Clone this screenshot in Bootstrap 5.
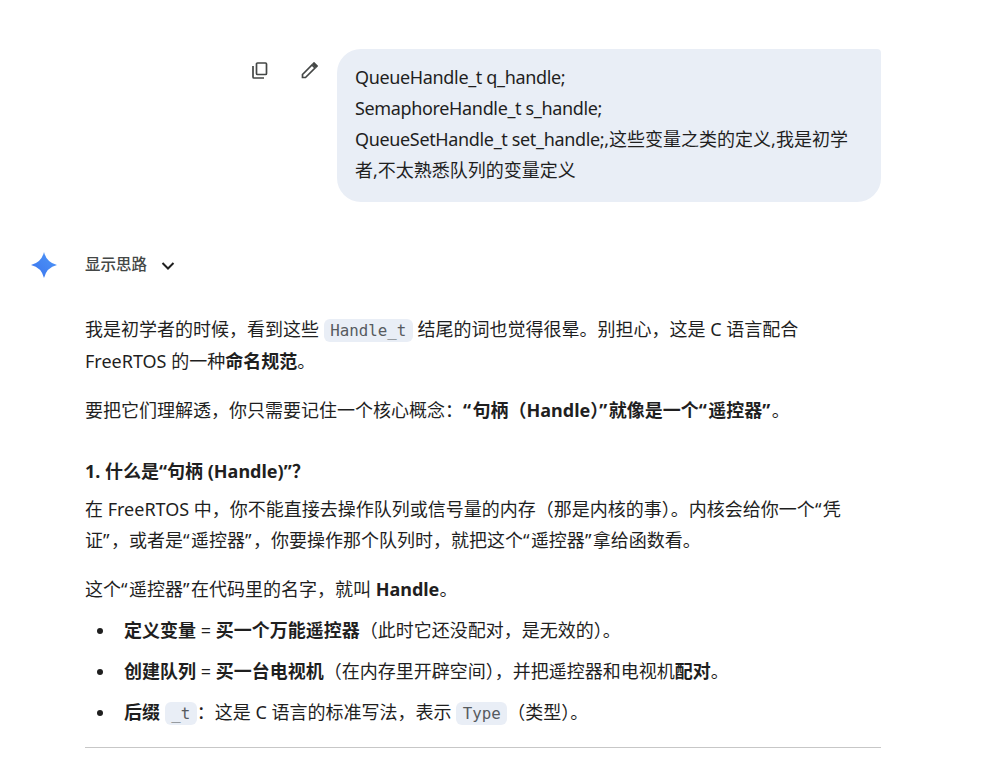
<!DOCTYPE html>
<html lang="zh-CN">
<head>
  <meta charset="UTF-8">
  <meta name="viewport" content="width=device-width, initial-scale=1.0">
  <title>显示思路</title>
  <link rel="stylesheet" href="https://cdn.jsdelivr.net/npm/bootstrap@5.3.0/dist/css/bootstrap.min.css">
  <style>
    body {
      background: #fff;
      color: #1f1f1f;
      font-family: "Noto Sans", "Noto Sans CJK SC", sans-serif;
      font-size: 18px;
      line-height: 31px;
      overflow: hidden;
    }
    .chat-page {
      height: 759px;
      padding: 49px 110px 0 31px;
      overflow: hidden;
    }
    .user-row {
      gap: 19px;
    }
    .tool-icons {
      gap: 33px;
      padding-top: 13px;
    }
    .tool-icons svg {
      display: block;
    }
    .user-bubble {
      width: 544px;
      padding: 13px 18px 16px;
      background: #e9eef6;
      border-radius: 24px 4px 24px 24px;
    }
    .latin-run {
      letter-spacing: -0.35px;
    }
    .think-row {
      margin-top: 50px;
      height: 26px;
      line-height: 24px;
      font-size: 15.5px;
      font-weight: 500;
      color: #444746;
    }
    .think-row span {
      padding-bottom: 2px;
    }
    .think-row svg.star {
      margin-right: 28px;
    }
    .think-row svg.chev {
      margin-left: 14px;
      margin-top: 2px;
    }
    .answer {
      padding-left: 54px;
      margin-top: 36px;
    }
    .answer p {
      margin-bottom: 18px;
    }
    .answer b {
      font-weight: 700;
    }
    .answer h3 {
      font-size: 18px;
      font-weight: 700;
      line-height: 31px;
      margin: 30px 0 7px;
    }
    .answer code {
      font-family: "DejaVu Sans Mono", monospace;
      font-size: 15.800px;
      color: #575b5f;
      background: #e9eef6;
      border-radius: 6px;
      padding: 2px 6.500px;
    }
    .qt {
      letter-spacing: 1.500px;
    }
    .answer ul {
      list-style: none;
      margin: -8px 0 0;
      padding-left: 39px;
    }
    .answer li {
      margin-bottom: 10px;
    }
    .answer li::before {
      content: "";
      display: inline-block;
      width: 6px;
      height: 6px;
      border-radius: 50%;
      background: #1f1f1f;
      margin-left: -27px;
      margin-right: 21px;
      vertical-align: 3px;
    }
    .answer hr {
      margin: 18px 0 0;
      border-top: 1px solid #c7c7c7;
      opacity: 1;
    }
  </style>
</head>
<body>
  <div class="chat-page">
    <div class="user-row d-flex justify-content-end">
      <div class="tool-icons d-flex align-items-start">
        <svg width="16" height="17" viewBox="0 0 16 17" fill="none" stroke="#444746" stroke-width="1.7">
          <rect x="4.500" y="1" width="10" height="11.500" rx="1"/>
          <path d="M1 4v11a1 1 0 0 0 1 1h10"/>
        </svg>
        <svg width="17" height="17" viewBox="0 0 17 17" fill="none" stroke="#444746" stroke-width="1.7">
          <path d="M1.500 15.500v-3L11 3l3 3-9.500 9.500z"/>
          <path d="M12 2l1-1 3 3-1 1z" fill="#444746"/>
        </svg>
      </div>
      <div class="user-bubble">
        <span class="latin-run">QueueHandle_t q_handle;</span><br>
        <span class="latin-run">SemaphoreHandle_t s_handle;</span><br>
        <span class="latin-run">QueueSetHandle_t set_handle;</span>,这些变量之类的定义,我是初学<br>者,不太熟悉队列的变量定义
      </div>
    </div>

    <div class="think-row d-flex align-items-center">
      <svg class="star" width="26" height="26" viewBox="0 0 26 26">
        <defs>
          <linearGradient id="starFill" x1="0" y1="1" x2="1" y2="0">
            <stop offset="0" stop-color="#3a74ee"/>
            <stop offset="1" stop-color="#4f97f7"/>
          </linearGradient>
        </defs>
        <path d="M13 0Q15.500 10.500 26 13Q15.500 15.500 13 26Q10.500 15.500 0 13Q10.500 10.500 13 0Z" fill="url(#starFill)"/>
      </svg>
      <span>显示思路</span>
      <svg class="chev" width="14" height="10" viewBox="0 0 14 10" fill="none" stroke="#1f1f1f" stroke-width="2">
        <path d="M1.500 2l5.500 5.500L12.500 2"/>
      </svg>
    </div>

    <div class="answer">
      <p>我是初学者的时候，看到这些 <code>Handle_t</code> 结尾的词也觉得很晕。别担心，这是 C 语言配合<br>FreeRTOS 的一种<b>命名规范</b>。</p>
      <p>要把它们理解透，你只需要记住一个核心概念：<b><span class="qt">“</span>句柄（Handle）<span class="qt">”</span>就像是一个<span class="qt">“</span>遥控器<span class="qt">”</span></b>。</p>
      <h3>1. 什么是“句柄 (Handle)”？</h3>
      <p>在 FreeRTOS 中，你不能直接去操作队列或信号量的内存（那是内核的事）。内核会给你一个<span class="qt">“</span>凭<br>证<span class="qt">”</span>，或者是<span class="qt">“</span>遥控器<span class="qt">”</span>，你要操作那个队列时，就把这个<span class="qt">“</span>遥控器<span class="qt">”</span>拿给函数看。</p>
      <p>这个<span class="qt">“</span>遥控器<span class="qt">”</span>在代码里的名字，就叫 <b>Handle</b>。</p>
      <ul>
        <li><b>定义变量</b> = <b>买一个万能遥控器</b>（此时它还没配对，是无效的）。</li>
        <li><b>创建队列</b> = <b>买一台电视机</b>（在内存里开辟空间），并把遥控器和电视机<b>配对</b>。</li>
        <li><b>后缀</b> <code>_t</code>：这是 C 语言的标准写法，表示 <code>Type</code>（类型）。</li>
      </ul>
      <hr>
    </div>
  </div>
  <script src="https://cdn.jsdelivr.net/npm/bootstrap@5.3.0/dist/js/bootstrap.bundle.min.js"></script>
</body>
</html>
